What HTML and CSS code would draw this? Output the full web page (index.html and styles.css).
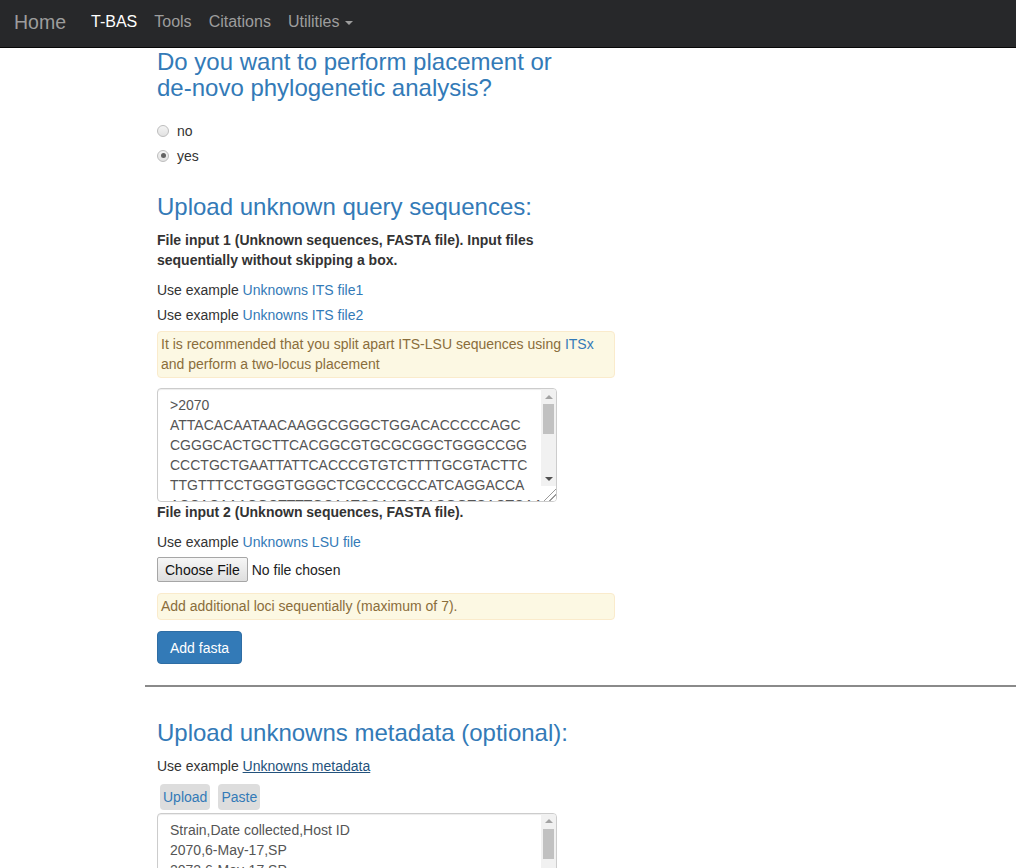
FILE: index.html
```html
<!DOCTYPE html>
<html>
<head>
<meta charset="utf-8">
<title>T-BAS</title>
<link rel="stylesheet" href="styles.css">
</head>
<body>
<nav class="navbar">
  <a class="brand" href="#">Home</a>
  <ul class="nav">
    <li><a class="active" href="#">T-BAS</a></li>
    <li><a href="#">Tools</a></li>
    <li><a href="#">Citations</a></li>
    <li><a href="#">Utilities <span class="caret"></span></a></li>
  </ul>
</nav>
<main class="main">
  <section class="col">
    <h3 class="title first">Do you want to perform placement or de-novo phylogenetic analysis?</h3>
    <div class="radios">
      <label class="radio"><input type="radio" name="mode"> no</label>
      <label class="radio"><input type="radio" name="mode" checked> yes</label>
    </div>

    <h3 class="title second">Upload unknown query sequences:</h3>
    <p class="label">File input 1 (Unknown sequences, FASTA file). Input files sequentially without skipping a box.</p>
    <p class="example">Use example <a href="#">Unknowns ITS file1</a></p>
    <p class="example tight">Use example <a href="#">Unknowns ITS file2</a></p>
    <div class="alert two">It is recommended that you split apart ITS-LSU sequences using <a href="#">ITSx</a> and perform a two-locus placement</div>
    <div class="textbox">
      <textarea class="seq" spellcheck="false">&gt;2070
ATTACACAATAACAAGGCGGGCTGGACACCCCCAGC
CGGGCACTGCTTCACGGCGTGCGCGGCTGGGCCGG
CCCTGCTGAATTATTCACCCGTGTCTTTTGCGTACTTC
TTGTTTCCTGGGTGGGCTCGCCCGCCATCAGGACCA
ACCACAAACGCTTTTGCAATCCAATCCACGGTCACTCAA
ACCGAACTCTTTCAACAACGGATCTCTTGGTTCTGGCA
TCGATGAAGAACGCAGCGAAATGCGATAAGTAATGTGA
ATTGCAGAATTCAGTGAATCATCGAATCTTTGAACGCA
CATTGCGCCCGCCAGTATTCTGGCGGGCATGCCTGTTC</textarea>
      <div class="vscroll">
        <span class="arrow up"></span>
        <span class="thumb"></span>
        <span class="track"></span>
        <span class="arrow down"></span>
        <span class="grip"></span>
      </div>
    </div>
    <p class="label solo">File input 2 (Unknown sequences, FASTA file).</p>
    <p class="example">Use example <a href="#">Unknowns LSU file</a></p>
    <input class="file" type="file">
    <div class="alert one">Add additional loci sequentially (maximum of 7).</div>
    <button class="btn-primary" type="button">Add fasta</button>
  </section>

  <hr class="divider">

  <section class="col">
    <h3 class="title third">Upload unknowns metadata (optional):</h3>
    <p class="example meta">Use example <a class="dark" href="#">Unknowns metadata</a></p>
    <div class="tabs">
      <button class="tab" type="button">Upload</button>
      <button class="tab" type="button">Paste</button>
    </div>
    <div class="textbox meta-box">
      <textarea class="seq" spellcheck="false">Strain,Date collected,Host ID
2070,6-May-17,SP
2072,6-May-17,SP
2073,6-May-17,SP
2074,6-May-17,SP
2075,6-May-17,SP
2076,6-May-17,SP
2077,6-May-17,SP
2078,6-May-17,SP</textarea>
      <div class="vscroll">
        <span class="arrow up"></span>
        <span class="thumb"></span>
        <span class="track"></span>
        <span class="arrow down"></span>
        <span class="grip"></span>
      </div>
    </div>
  </section>
</main>
</body>
</html>
```

FILE: styles.css
```css
* { box-sizing: border-box; }

html, body {
  margin: 0;
  padding: 0;
  background: #fff;
}

body {
  font-family: "Liberation Sans", Arial, sans-serif;
  font-size: 14px;
  line-height: 20px;
  color: #333;
}

a {
  color: #337ab7;
  text-decoration: none;
}

a.dark {
  color: #23527c;
  text-decoration: underline;
}

/* navbar */
.navbar {
  height: 48px;
  background: #27282a;
  border-bottom: 1px solid #080808;
  display: flex;
  align-items: center;
  padding-bottom: 3px;
}

.brand {
  color: #9d9d9d;
  font-size: 19.5px;
  margin-left: 14px;
  margin-right: 25px;
}

.nav {
  list-style: none;
  margin: 0;
  padding: 0;
  display: flex;
  gap: 17px;
}

.nav a {
  color: #9d9d9d;
  font-size: 16px;
}

.nav a.active {
  color: #fff;
}

.caret {
  display: inline-block;
  width: 0;
  height: 0;
  margin-left: 1px;
  vertical-align: middle;
  border-top: 4px solid #9d9d9d;
  border-left: 4px solid transparent;
  border-right: 4px solid transparent;
}

/* main */
.main {
  margin-left: 145px;
}

.col {
  width: 470px;
  padding-left: 12px;
}

.title {
  font-family: "Liberation Sans", Arial, sans-serif;
  font-weight: 400;
  font-size: 24px;
  line-height: 26.4px;
  color: #337ab7;
  margin: 0;
}

.title.first {
  margin-top: 1px;
  width: 420px;
}

.title.second {
  margin-top: 28px;
}

.title.third {
  margin-top: 33px;
}

.radios {
  margin-top: 19px;
  display: flex;
  flex-direction: column;
  gap: 5px;
}

.radio {
  display: flex;
  align-items: center;
  height: 20px;
  color: #333;
}

.radio input {
  appearance: none;
  -webkit-appearance: none;
  margin: 0 8px 0 0;
  width: 12px;
  height: 12px;
  border-radius: 50%;
  border: 1px solid #bdbdbd;
  background: linear-gradient(#f4f4f4, #e2e2e2);
  position: relative;
}

.radio input:checked::after {
  content: "";
  position: absolute;
  left: 2.5px;
  top: 2.5px;
  width: 5px;
  height: 5px;
  border-radius: 50%;
  background: #636363;
}

p {
  margin: 0;
}

.label {
  font-weight: 700;
  margin-top: 10px;
  width: 420px;
}

.label.solo {
  margin-top: 0;
}

.example {
  margin-top: 10px;
}

.example.tight {
  margin-top: 5px;
}

.example.meta {
  margin-top: 9px;
}

.alert {
  width: 458px;
  background: #fcf8e3;
  border: 1px solid #faebcc;
  color: #8a6d3b;
  border-radius: 4px;
  padding: 2px 3px 3px;
}

.alert.two {
  margin-top: 6px;
}

.alert.one {
  margin-top: 11px;
}

/* textarea with scrollbar */
.textbox {
  display: flex;
  margin-top: 10px;
  width: 400px;
  height: 114px;
  border: 1px solid #ccc;
  border-radius: 4px;
  overflow: hidden;
  box-shadow: inset 0 1px 1px rgba(0,0,0,0.075);
  background: #fff;
}

.seq {
  flex: 1;
  min-width: 0;
  height: 100%;
  margin: 0;
  padding: 6px 12px 4px;
  border: 0;
  outline: none;
  background: transparent;
  font-family: "Liberation Sans", Arial, sans-serif;
  font-size: 14px;
  line-height: 20px;
  color: #555;
  white-space: pre;
  overflow: hidden;
  resize: none;
}

.vscroll {
  width: 15px;
  flex: none;
  display: flex;
  flex-direction: column;
  background: #f1f1f1;
}

.arrow {
  height: 15px;
  flex: none;
  display: flex;
  align-items: center;
  justify-content: center;
}

.arrow::before {
  content: "";
  width: 0;
  height: 0;
  border-left: 4px solid transparent;
  border-right: 4px solid transparent;
}

.arrow.up::before {
  border-bottom: 4px solid #a3a3a3;
}

.arrow.down::before {
  border-top: 4px solid #505050;
}

.thumb {
  height: 30px;
  flex: none;
  margin: 0 2px;
  background: #c1c1c1;
}

.track {
  flex: 1;
}

.grip {
  height: 15px;
  flex: none;
  background:
    linear-gradient(135deg, #fff 0 58%, #9a9a9a 58% 63%, #fff 63% 76%, #9a9a9a 76% 81%, #fff 81%);
}

.file {
  display: block;
  margin-top: 5px;
  font-family: "Liberation Sans", Arial, sans-serif;
  font-size: 14px;
  height: 25px;
  color: #222;
}

.file::file-selector-button {
  height: 25px;
  padding: 0 7px;
  margin-right: 4px;
  font-family: "Liberation Sans", Arial, sans-serif;
  font-size: 14px;
  color: #111;
  background: linear-gradient(#f6f6f6, #dedede);
  border: 1px solid #a6a6a6;
  border-radius: 2px;
}

.btn-primary {
  display: block;
  margin-top: 11px;
  height: 33px;
  padding: 6px 12px;
  background: #337ab7;
  color: #fff;
  border: 1px solid #2e6da4;
  border-radius: 4px;
  font-family: "Liberation Sans", Arial, sans-serif;
  font-size: 14px;
  line-height: 20px;
}

.divider {
  margin: 21px 0 0 0;
  border: 0;
  border-top: 2px solid #8a8a8a;
  height: 0;
}

.tabs {
  margin-top: 8px;
  margin-left: 3px;
  display: flex;
  gap: 8px;
}

.tab {
  height: 26px;
  padding: 3px 3px;
  background: #ddd;
  border: 0;
  border-radius: 4px;
  color: #337ab7;
  font-family: "Liberation Sans", Arial, sans-serif;
  font-size: 14px;
  line-height: 20px;
}

.textbox.meta-box {
  margin-top: 3px;
}
```
